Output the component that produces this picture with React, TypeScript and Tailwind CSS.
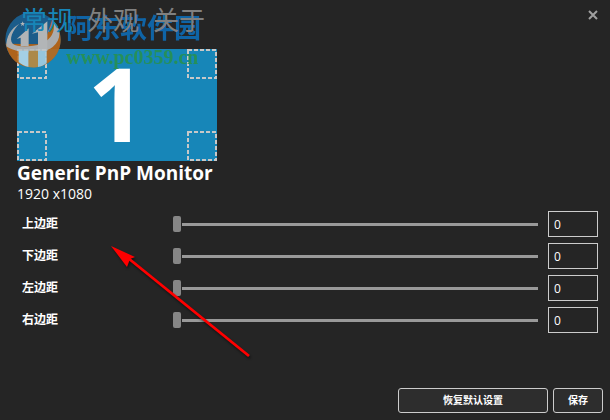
import React, { useState } from 'react';

const TABS = ['常规', '外观', '关于'];

const MARGINS = [
  { id: 'top', label: '上边距' },
  { id: 'bottom', label: '下边距' },
  { id: 'left', label: '左边距' },
  { id: 'right', label: '右边距' },
];

const SiteLogo: React.FC = () => (
  <svg width="58" height="58" viewBox="0 0 174 174" aria-hidden="true">
    <circle cx="87" cy="86" r="83" fill="#1a6395" />
    {/* lower half and the right edge */}
    <path d="M5 98C14 145 46 169 87 169C134 169 170 132 170 86C170 62 160 40 144 26L120 100Z" fill="#bd6a1a" />
    {/* light swoosh running round the inner disc */}
    <path d="M46 38C22 52 6 76 7 106C40 128 110 134 146 108C174 86 172 50 146 28C158 60 140 88 112 98C84 108 40 110 26 98C14 84 26 58 46 38Z" fill="#b9bcbe" />
    {/* two rising bars */}
    <path d="M38 84L74 52V106H50V80Z" fill="#c2c5c7" />
    <path d="M84 68L130 31V120H102V64Z" fill="#c2c5c7" />
    <path d="M44 119H74V168C62 166 50 159 44 153Z" fill="#b4d9ea" />
    <path d="M74 119H102V168C92 170 82 169 74 168Z" fill="#bd8a3e" />
    <path d="M102 119H128V157C120 163 111 167 102 168Z" fill="#a4cde2" />
    <path d="M56 31L58 36L63 37L59 40L60 45L56 42L51 45L53 40L48 37L54 36Z" fill="#c2c5c7" />
  </svg>
);

const Watermark: React.FC = () => (
  <div className="pointer-events-none absolute top-[11px] left-1 flex items-start opacity-90">
    <SiteLogo />
    <div className="flex flex-col whitespace-nowrap pl-1 font-['Liberation_Serif','Noto_Sans_CJK_SC',serif] font-bold">
      <span className="text-[27px] leading-9 text-[#0d6bb5]">阿东软件园</span>
      <span className="text-xl leading-5 text-[#279150]">www.pc0359.cn</span>
    </div>
  </div>
);

const Corner: React.FC = () => (
  <svg className="size-[30px]" viewBox="0 0 30 30" aria-hidden="true">
    <rect x="1" y="1" width="28" height="28" fill="none" stroke="#c8c8c8" strokeWidth="2" strokeDasharray="4 2" />
  </svg>
);

const Arrow: React.FC = () => (
  <svg
    className="pointer-events-none absolute top-[244px] left-[110px] drop-shadow-[1px_2px_1px_rgba(0,0,0,0.5)]"
    width="142"
    height="116"
    viewBox="0 0 142 116"
    aria-hidden="true"
  >
    <path d="M18 14L139 112" stroke="#f00" strokeWidth="2.8" />
    <path d="M1 2L25 13L20 15L17 23Z" fill="#f00" />
  </svg>
);

interface MarginRowProps {
  id: string;
  label: string;
}

const MarginRow: React.FC<MarginRowProps> = ({ id, label }) => {
  const [value, setValue] = useState('0');

  return (
    <div className="flex h-8 items-center">
      <label htmlFor={id} className="w-[151px] text-xs font-bold">
        {label}
      </label>
      <input
        id={id}
        type="range"
        min={0}
        max={500}
        value={Number(value) || 0}
        onChange={(e) => setValue(e.target.value)}
        className="h-4 min-w-0 flex-1 appearance-none bg-transparent [&::-webkit-slider-runnable-track]:h-[3px] [&::-webkit-slider-runnable-track]:bg-[#999999] [&::-webkit-slider-thumb]:-mt-[7px] [&::-webkit-slider-thumb]:h-4 [&::-webkit-slider-thumb]:w-2 [&::-webkit-slider-thumb]:appearance-none [&::-webkit-slider-thumb]:rounded-xs [&::-webkit-slider-thumb]:bg-[#868686] [&::-webkit-slider-thumb]:shadow-[1px_0_0_#252525]"
      />
      <input
        type="text"
        aria-label={label}
        value={value}
        onChange={(e) => setValue(e.target.value)}
        className="ml-2.5 h-[26px] w-[50px] border border-[#cccccc] bg-transparent px-[5px] text-xs text-white"
      />
    </div>
  );
};

const App: React.FC = () => {
  const [tab, setTab] = useState(TABS[0]);

  return (
    <div className="relative flex min-h-screen flex-col bg-[#252525] font-['Open_Sans','Noto_Sans_CJK_SC',sans-serif] text-white">
      <header className="z-10 flex items-start justify-between pt-1 pr-3 pl-[21px]">
        <nav className="flex gap-3.5">
          {TABS.map((name) => (
            <button
              key={name}
              onClick={() => setTab(name)}
              className={`text-[26px] leading-8 ${name === tab ? 'text-[#1786b8]' : 'text-[#808080]'}`}
            >
              {name}
            </button>
          ))}
        </nav>
        <button aria-label="关闭" className="mt-1.5">
          <svg width="10" height="10" viewBox="0 0 10 10">
            <path d="M1 1L9 9M9 1L1 9" stroke="#a0a0a0" strokeWidth="2" />
          </svg>
        </button>
      </header>

      <main className="px-3 pt-[13px] pl-[17px]">
        <div className="grid h-28 w-[200px] grid-cols-[30px_1fr_30px] bg-[#1786b8]">
          <div className="flex flex-col justify-between">
            <Corner />
            <Corner />
          </div>
          <div className="flex items-center justify-center pb-1 text-[102px] leading-none font-bold">1</div>
          <div className="flex flex-col justify-between">
            <Corner />
            <Corner />
          </div>
        </div>
        <h1 className="text-[19px] leading-6 font-bold">Generic PnP Monitor</h1>
        <p className="text-sm leading-[18px]">1920 x1080</p>

        <div className="pt-[5px] pl-[5px]">
          {MARGINS.map((m) => (
            <MarginRow key={m.id} id={m.id} label={m.label} />
          ))}
        </div>
      </main>

      <footer className="mt-auto flex justify-end gap-[5px] pr-[7px] pb-[7px] text-[10px] font-bold">
        <button className="h-[25px] w-[150px] rounded-[3px] border border-[#cccccc] bg-[#2d2d2d]">恢复默认设置</button>
        <button className="h-[25px] w-[50px] rounded-[3px] border border-[#cccccc] bg-[#2d2d2d]">保存</button>
      </footer>

      <Watermark />
      <Arrow />
    </div>
  );
};

export default App;
